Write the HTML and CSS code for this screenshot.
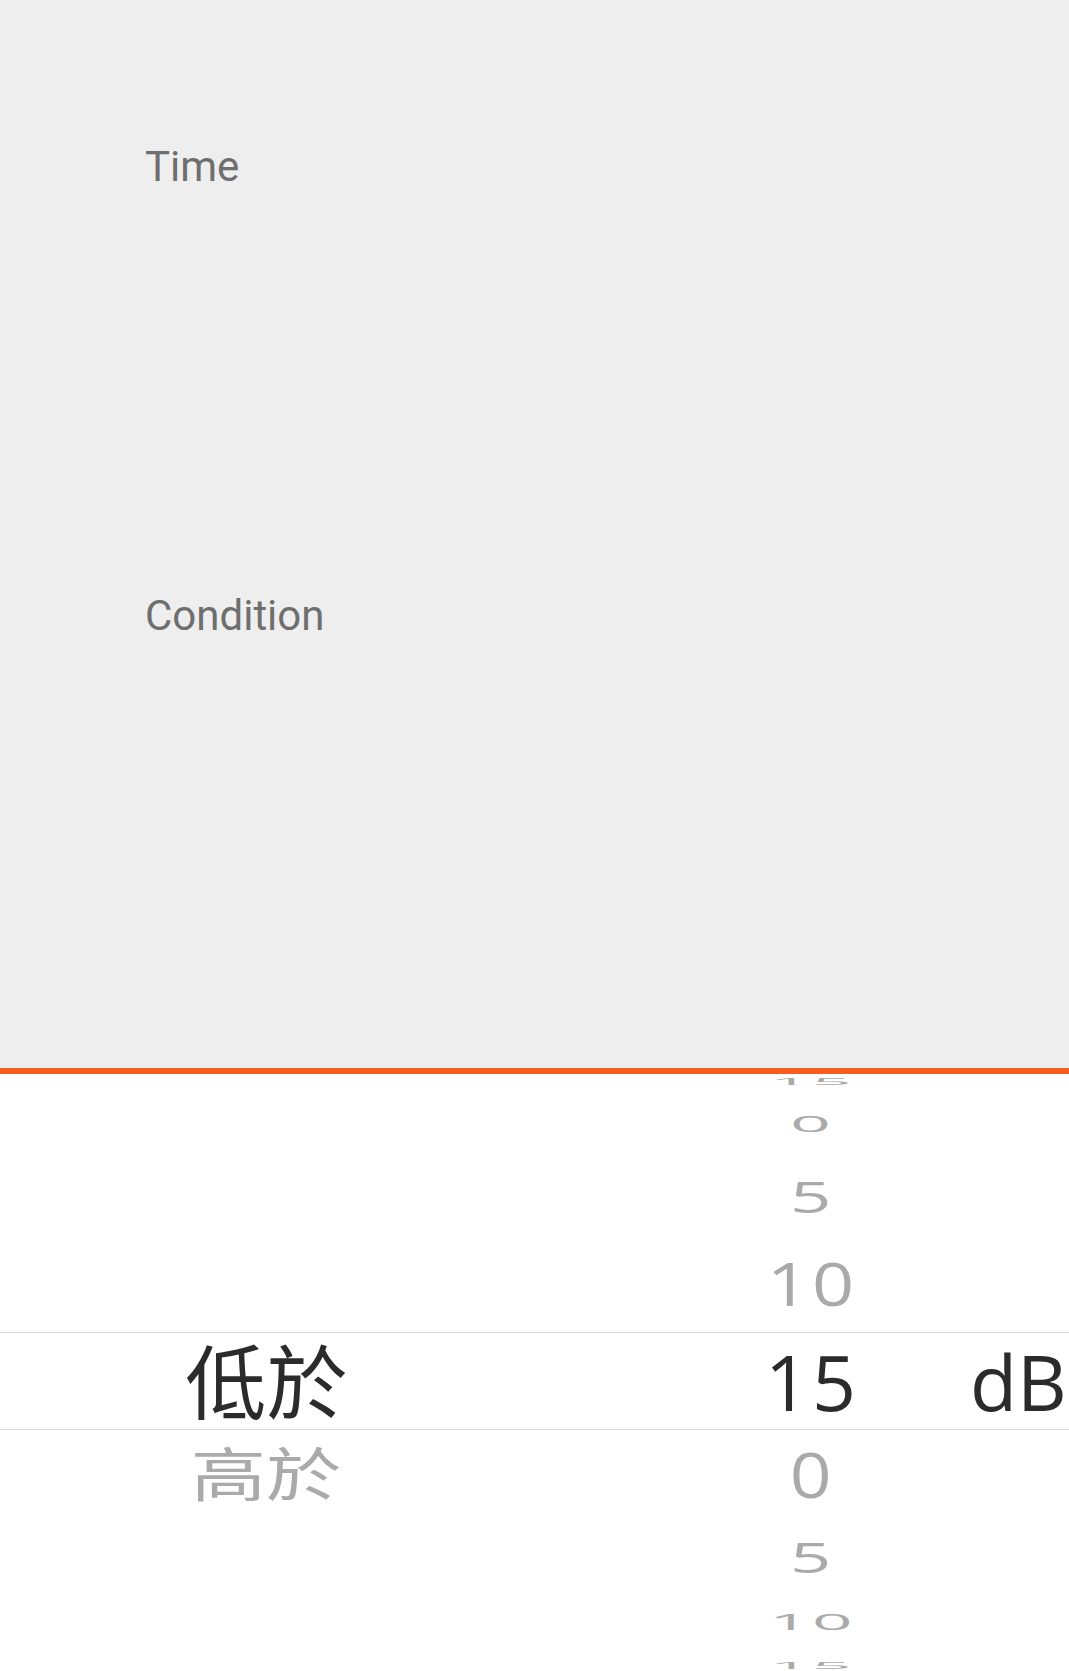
FILE: index.html
```html
<!DOCTYPE html>
<html lang="zh-Hant">
<head>
<meta charset="utf-8">
<title>Condition picker</title>
<link rel="stylesheet" href="styles.css">
</head>
<body>
<div class="page">
  <section class="settings">
    <div class="label">Time</div>
    <div class="label cond">Condition</div>
  </section>
  <div class="accent"></div>
  <section class="wheel">
    <div class="row r-4"><div class="c1"></div><div class="c2"><span class="num t">15</span></div><div class="c3"></div></div>
    <div class="row r-3"><div class="c1"></div><div class="c2"><span class="num t">0</span></div><div class="c3"></div></div>
    <div class="row r-2"><div class="c1"></div><div class="c2"><span class="num t">5</span></div><div class="c3"></div></div>
    <div class="row r-1"><div class="c1"></div><div class="c2"><span class="num t">10</span></div><div class="c3"></div></div>
    <div class="row r0"><div class="c1"><span class="cjk t">低於</span></div><div class="c2"><span class="num t">15</span></div><div class="c3"><span class="unit">dB</span></div></div>
    <div class="row r1"><div class="c1"><span class="cjk t">高於</span></div><div class="c2"><span class="num t">0</span></div><div class="c3"></div></div>
    <div class="row r2"><div class="c1"></div><div class="c2"><span class="num t">5</span></div><div class="c3"></div></div>
    <div class="row r3"><div class="c1"></div><div class="c2"><span class="num t">10</span></div><div class="c3"></div></div>
    <div class="row r4"><div class="c1"></div><div class="c2"><span class="num t">15</span></div><div class="c3"></div></div>
  </section>
</div>
</body>
</html>
```
FILE: styles.css
```css
html, body {
  margin: 0;
  padding: 0;
  background: #ffffff;
}
body {
  width: 1069px;
  height: 1671px;
  overflow: hidden;
}
.page {
  display: flex;
  flex-direction: column;
  width: 1069px;
  height: 1671px;
}
.settings {
  background: #eeeeee;
  height: 1068px;
  padding: 143px 0 0 145px;
  box-sizing: border-box;
  display: flex;
  flex-direction: column;
}
.label {
  font-family: Roboto, "Noto Sans", sans-serif;
  font-size: 42px;
  line-height: 48px;
  color: #6e6e6e;
}
.label.cond {
  margin-top: 401px;
}
.accent {
  height: 6px;
  background: #f75d21;
  flex: none;
}
.wheel {
  flex: 1;
  overflow: hidden;
  display: flex;
  flex-direction: column;
  background: #ffffff;
}
.row {
  display: grid;
  grid-template-columns: 533px 437px 1fr;
  flex: none;
}
.c1, .c2, .c3 {
  display: flex;
  align-items: center;
  height: 100%;
  min-height: 0;
}
.c1 {
  justify-content: center;
}
.c2 {
  padding-left: 219px;
}
.num {
  width: 120px;
  text-align: center;
  font-family: "Open Sans", "DejaVu Sans", sans-serif;
  font-size: 77px;
  line-height: 1;
  color: #aaaaaa;
  display: block;
  letter-spacing: 3px;
}
.cjk {
  font-family: "Noto Sans CJK TC", "Noto Sans CJK SC", sans-serif;
  font-size: 81px;
  line-height: 1;
  color: #aaaaaa;
  display: block;
  margin-top: -8px;
}
.unit {
  font-family: "Open Sans", "DejaVu Sans", sans-serif;
  font-size: 77px;
  line-height: 1;
  color: #2b2b2b;
  display: block;
  white-space: nowrap;
}
.r-4 { height: 14px; }
.r-3 { height: 70px; }
.r-2 { height: 74px; }
.r-1 { height: 100px; }
.r0 {
  height: 98px;
  box-sizing: border-box;
  border-top: 1px solid #d9d9d9;
  border-bottom: 1px solid #d9d9d9;
}
.r1 { height: 88px; }
.r2 { height: 76px; }
.r3 { height: 54px; }
.r4 { height: 34px; }

.r0 .t { color: #2b2b2b; }
.r-4 .t { transform: scale(0.9, 0.12); }
.r-3 .t { transform: scale(0.92, 0.29); }
.r-2 .t { transform: scale(0.94, 0.58); }
.r-1 .t { transform: scale(0.96, 0.78); }
.r1 .t { transform: scale(0.95, 0.8); }
.r1 .cjk { transform: scale(0.93, 0.72); }
.r2 .t { transform: scale(0.94, 0.55); }
.r3 .t { transform: scale(0.92, 0.29); }
.r4 .t { transform: scale(0.9, 0.12); }
```
